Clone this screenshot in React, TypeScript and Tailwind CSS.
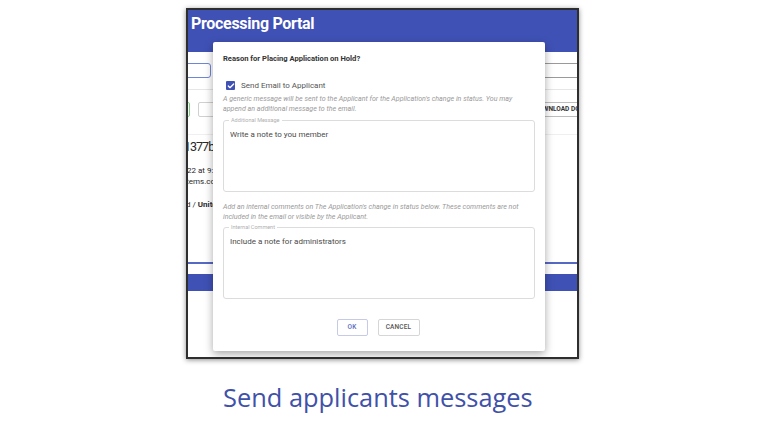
import { Check } from "lucide-react";

const ui = { fontFamily: "Roboto, 'Liberation Sans', sans-serif" };

function Field({ label, placeholder }: { label: string; placeholder: string }) {
  return (
    <div className="relative h-[72px] rounded-[3px] border border-[#dcdcdc]">
      <span className="absolute -top-[4px] left-[5px] bg-white px-[2px] text-[5.5px] leading-[7px] text-[#b0b0b0]">
        {label}
      </span>
      <p className="pl-[6px] pt-[9px] text-[8px] leading-[10px] text-[#4a4a4a]">{placeholder}</p>
    </div>
  );
}

function HoldDialog() {
  return (
    <div className="absolute left-[25px] top-[32px] flex w-[332px] flex-col rounded-[2px] bg-white px-[10px] pb-[15px] pt-[12px] shadow-[0_3px_8px_rgba(0,0,0,0.35)]">
      <p className="h-[10px] text-[7.6px] font-bold leading-[10px] text-[#333]">
        Reason for Placing Application on Hold?
      </p>

      <label className="mt-[17px] flex h-[9px] items-center gap-[6px]">
        <span className="ml-[3px] flex h-[9px] w-[9px] items-center justify-center rounded-[1px] bg-[#3f51b5]">
          <Check className="h-[8px] w-[8px] text-white" strokeWidth={4} />
        </span>
        <span className="text-[8px] text-[#555]">Send Email to Applicant</span>
      </label>

      <p className="mt-[4px] whitespace-nowrap text-[7.1px] italic leading-[10px] text-[#9a9a9a]">
        A generic message will be sent to the Applicant for the Application's change in status. You may
        <br />
        append an additional message to the email.
      </p>

      <div className="mt-[6px]">
        <Field label="Additional Message" placeholder="Write a note to you member" />
      </div>

      <p className="mt-[10px] whitespace-nowrap text-[7.1px] italic leading-[10px] text-[#9a9a9a]">
        Add an internal comments on The Application's change in status below. These comments are not
        <br />
        included in the email or visible by the Applicant.
      </p>

      <div className="mt-[5px]">
        <Field label="Internal Comment" placeholder="Include a note for administrators" />
      </div>

      <div className="mt-[20px] flex justify-center gap-[10px] pr-[2px]">
        <button className="h-[17px] w-[31px] rounded-[2px] border border-[#c5cae6] text-[6.5px] font-medium tracking-wide text-[#5c6bc0]">
          OK
        </button>
        <button className="h-[17px] w-[42px] rounded-[2px] border border-[#d6d6d6] text-[6.5px] font-medium tracking-wide text-[#555]">
          CANCEL
        </button>
      </div>
    </div>
  );
}

export default function App() {
  return (
    <div className="flex h-[425px] w-[764px] flex-col bg-white" style={ui}>
      <div className="ml-[186px] mt-[8px] h-[351px] w-[393px] shadow-[0_1px_5px_rgba(0,0,0,0.45)]">
        <div className="relative flex h-full flex-col overflow-hidden border-2 border-[#2e2e2e] bg-white">
          {/* header */}
          <div className="h-[42px] shrink-0 bg-[#3f51b5] pl-[3px] pt-[3px]">
            <p className="text-[16px] font-bold leading-[22px] tracking-[-0.3px] text-white">Processing Portal</p>
          </div>

          {/* search fields */}
          <div className="mt-[11px] flex h-[15px] shrink-0">
            <div className="-ml-[40px] w-[63px] rounded-[3px] border border-[#6f86d6]" />
            <div className="ml-auto w-[150px] border-y border-[#9a9a9a]" />
          </div>
          <div className="mt-[11px] h-px shrink-0 bg-[#e6e6e6]" />

          {/* action buttons */}
          <div className="mt-[12px] flex h-[15px] shrink-0">
            <div className="-ml-[28px] w-[30px] rounded-[2px] border border-[#7ccf7c]" />
            <div className="ml-[8px] w-[50px] rounded-[2px] border border-[#d0d0d0]" />
            <div className="-mr-[60px] ml-auto flex w-[110px] items-center rounded-[2px] border border-[#bdbdbd] pl-[6px]">
              <span className="whitespace-nowrap text-[6.5px] font-bold text-[#333]">DOWNLOAD DOCUMENTS</span>
            </div>
          </div>
          <div className="mt-[17px] h-px shrink-0 bg-[#efefef]" />

          {/* details */}
          <div className="mt-[4px] flex shrink-0 flex-col whitespace-nowrap text-[#2a2a2a]">
            <p className="-ml-[10px] text-[12.5px] leading-[16px] tracking-[-1px]">01377b</p>
            <p className="-ml-[10px] mt-[10px] text-[8px] leading-[11px]">2022 at 9:41</p>
            <p className="-ml-[21px] text-[8px] leading-[11px]">@systems.com</p>
            <p className="-ml-[28px] mt-[12px] text-[8px] leading-[11px]">
              Onboard / <span className="font-bold">United</span>
            </p>
          </div>

          <div className="mt-auto h-[2px] shrink-0 bg-[#5568c4]" />
          <div className="mt-[10px] h-[17px] shrink-0 bg-[#3f51b5]" />
          <div className="h-[66px] shrink-0" />

          <HoldDialog />
        </div>
      </div>

      <p
        className="ml-[223px] mt-[23px] text-[25.4px] leading-[30px] text-[#3f51a8]"
        style={{ fontFamily: "'Open Sans', 'Liberation Sans', sans-serif" }}
      >
        Send applicants messages
      </p>
    </div>
  );
}
